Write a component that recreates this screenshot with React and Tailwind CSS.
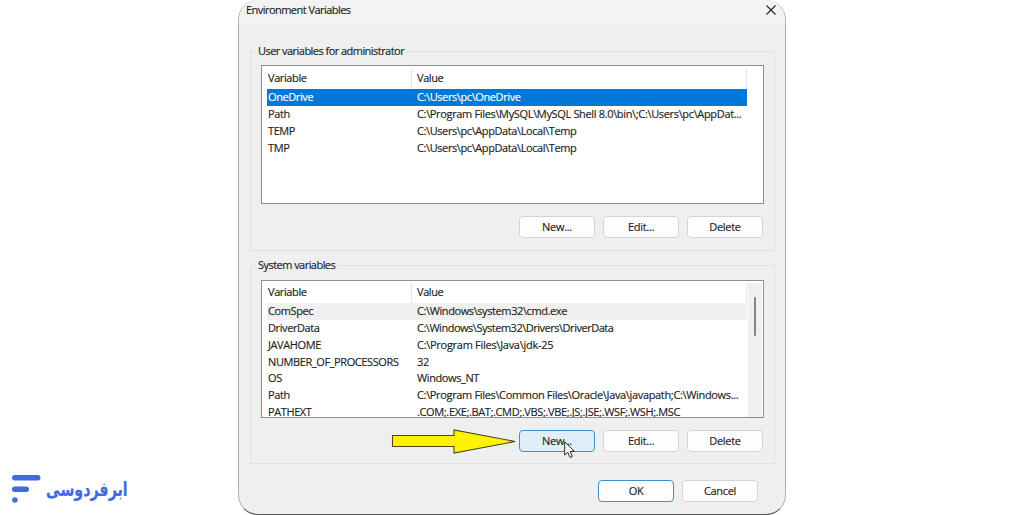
import React from "react";

const userVariables = [
  { name: "OneDrive", value: "C:\\Users\\pc\\OneDrive" },
  { name: "Path", value: "C:\\Program Files\\MySQL\\MySQL Shell 8.0\\bin\\;C:\\Users\\pc\\AppDat...", tracking: "tracking-[-0.34px]" },
  { name: "TEMP", value: "C:\\Users\\pc\\AppData\\Local\\Temp" },
  { name: "TMP", value: "C:\\Users\\pc\\AppData\\Local\\Temp" },
];

const systemVariables = [
  { name: "ComSpec", value: "C:\\Windows\\system32\\cmd.exe" },
  { name: "DriverData", value: "C:\\Windows\\System32\\Drivers\\DriverData", tracking: "tracking-[-0.48px]" },
  { name: "JAVAHOME", value: "C:\\Program Files\\Java\\jdk-25", tracking: "tracking-[-0.28px]" },
  { name: "NUMBER_OF_PROCESSORS", value: "32" },
  { name: "OS", value: "Windows_NT" },
  { name: "Path", value: "C:\\Program Files\\Common Files\\Oracle\\Java\\javapath;C:\\Windows...", tracking: "tracking-[-0.34px]" },
  { name: "PATHEXT", value: ".COM;.EXE;.BAT;.CMD;.VBS;.VBE;.JS;.JSE;.WSF;.WSH;.MSC", tracking: "tracking-[-0.36px]" },
];

const buttonStyles = {
  normal: "border-[#d4d4d4] bg-[#fdfdfd]",
  hover: "border-[#3f8fd0] bg-[#e0eef9]",
  primary: "border-[#3f8fd0] bg-[#fdfdfd]",
};

const Button = ({ children, variant = "normal" }) => (
  <button
    type="button"
    className={`flex h-[22px] w-[76px] items-center justify-center rounded-[4px] border pb-[2px] tracking-[-0.3px] ${buttonStyles[variant]}`}
  >
    {children}
  </button>
);

const VariableTable = ({ rows, selectedClass, scrollbar }) => (
  <div className={`flex w-[503px] overflow-hidden border border-[#8b8f92] bg-white pl-[5px] ${scrollbar ? "h-[138px]" : "h-[139px]"}`}>
    <div className="w-[480px] shrink-0">
      <div className={`mt-[2px] flex border-r border-[#e5e5e5] ${scrollbar ? "h-[20px]" : "h-[21px]"}`}>
        <div className="flex w-[145px] items-center border-r border-[#e5e5e5] pb-[3px] pl-[1px] tracking-[-0.4px]">Variable</div>
        <div className="flex items-center pb-[3px] pl-[5px] tracking-[-0.4px]">Value</div>
      </div>
      {rows.map((row, i) => (
        <div key={row.name} className={`flex h-[16.8px] items-center pb-[1.4px] whitespace-nowrap ${i === 0 ? selectedClass : ""}`}>
          <div className="w-[150px] shrink-0 pl-[1px]">{row.name}</div>
          <div className={row.tracking}>{row.value}</div>
        </div>
      ))}
    </div>
    {scrollbar && (
      <div className="mt-[2px] ml-[1px] flex w-[14px] justify-center bg-[#f0f0f0] pt-[14px]">
        <div className="h-[39px] w-[2px] rounded-full bg-[#858585]" />
      </div>
    )}
  </div>
);

const VariableGroup = ({ title, children, hovered }) => (
  <fieldset className={`relative w-[525px] border border-[#e0e0e0] pl-[10px] ${hovered ? "h-[199px] pt-[14px]" : "h-[200px] pt-[13px]"}`}>
    <div className="absolute -top-[9px] left-[5px] bg-[#efefef] px-[2px] leading-4 tracking-[-0.54px]">{title}</div>
    {children}
    <div className="mt-[12px] flex gap-2 pl-[258px]">
      <Button variant={hovered ? "hover" : "normal"}>New...</Button>
      <Button>Edit...</Button>
      <Button>Delete</Button>
    </div>
  </fieldset>
);

const Logo = () => (
  <div className="flex h-[30px] items-center gap-[5px]">
    <svg width="29" height="28" viewBox="0 0 29 28" fill="#4169e1">
      <rect x="0" y="0" width="28.5" height="5.5" rx="2.7" />
      <rect x="0" y="11.5" width="17" height="5.5" rx="2.7" />
      <circle cx="2.9" cy="25" r="2.8" />
    </svg>
    <span dir="rtl" className="origin-left scale-x-[0.79] scale-y-[1.1] font-['DejaVu_Sans',sans-serif] text-[18px] leading-none font-bold tracking-normal whitespace-nowrap text-[#4169e1]">
      ابرفردوسی
    </span>
  </div>
);

const App = () => (
  <div className="relative flex h-[515px] w-[1024px] overflow-hidden bg-white font-['Open_Sans','Noto_Sans',sans-serif] text-[11px] leading-none tracking-[-0.4px] text-[#1c1c1c] [-webkit-text-stroke:0.15px]">
    <div className="flex w-[238px] shrink-0 items-end pb-[11px] pl-[12px]">
      <Logo />
    </div>

    <div className="flex h-[515px] w-[548px] flex-col rounded-[20px] border-x border-b border-[#b0b0b0] border-b-[#555] bg-[#efefef]">
      <div className="flex h-[24px] shrink-0 justify-between rounded-t-[20px] bg-[#f3f3f3] pt-[5px] pr-[9px] pl-[7px]">
        <span className="-mt-[1px] tracking-[-0.54px]">Environment Variables</span>
        <svg width="10" height="10" viewBox="0 0 10 10" stroke="#222" strokeWidth="1.1">
          <path d="M0.5 0.5 9.5 9.5M9.5 0.5 0.5 9.5" />
        </svg>
      </div>
      <div className="flex flex-col gap-[14px] pt-[27px] pl-[11px]">
        <VariableGroup title="User variables for administrator">
          <VariableTable rows={userVariables} selectedClass="bg-[#0078d7] text-white" />
        </VariableGroup>
        <VariableGroup title="System variables" hovered>
          <VariableTable rows={systemVariables} selectedClass="bg-[#f0f0f0]" scrollbar />
        </VariableGroup>
      </div>
      <div className="mt-[16px] flex gap-2 pl-[359px]">
        <Button variant="primary">OK</Button>
        <Button>Cancel</Button>
      </div>
    </div>

    <svg className="absolute top-[428px] left-[391px]" width="126" height="27" viewBox="0 0 126 27">
      <path d="M1.5 7.5H63V2L124 13.5 63 25V18.5H1.5Z" fill="#fff200" stroke="#4a4a20" strokeWidth="1.1" />
    </svg>
    <svg className="absolute top-[441px] left-[564px]" width="12" height="18" viewBox="0 0 12 18">
      <path d="M0.7 0.8V14L3.8 11.2 6 16.5 8.4 15.5 6.2 10.4H10.3Z" fill="#fff" stroke="#222" strokeWidth="1" />
    </svg>
  </div>
);

export default App;
